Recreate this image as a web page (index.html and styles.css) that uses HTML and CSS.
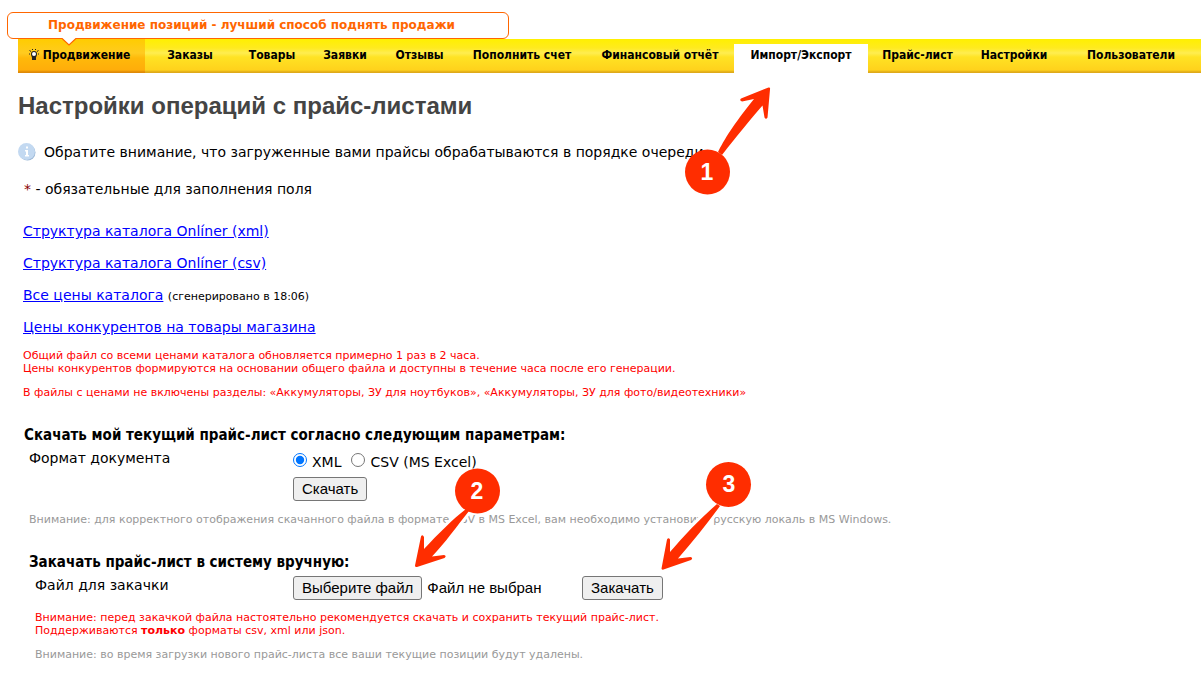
FILE: index.html
```html
<!DOCTYPE html>
<html lang="ru">
<head>
<meta charset="utf-8">
<title>Настройки операций с прайс-листами</title>
<link rel="stylesheet" href="styles.css">
</head>
<body>
<header class="header">
  <p class="balloon">Продвижение позиций - лучший способ поднять продажи
    <svg class="balloon-tail" width="14" height="8" viewBox="0 0 14 8"><path d="M0 0H14L7 7Z" fill="#fff"/><path d="M0 .5 7 7 14 .5" fill="none" stroke="#f60" stroke-width="1.2"/></svg>
  </p>
  <nav class="nav">
    <a class="tab tab-promo" href="#"><svg width="10" height="12" viewBox="0 0 10 12"><path d="M.5 1.500 2 2.500M9.500 1.500 8 2.500M0 5H1M9 5h1M3 .5h1M6 .5h1" stroke="#222" stroke-width="1"/><path d="M5 2a3 3 0 0 1 3 3c0 2-1 2.500-1 4v2H3V9C3 7.500 2 7 2 5a3 3 0 0 1 3-3Z" fill="#222"/><circle cx="5" cy="5" r="2" fill="#fff"/></svg>Продвижение</a>
    <a class="tab" href="#">Заказы</a>
    <a class="tab" href="#">Товары</a>
    <a class="tab" href="#">Заявки</a>
    <a class="tab" href="#">Отзывы</a>
    <a class="tab" href="#">Пополнить счет</a>
    <a class="tab" href="#">Финансовый отчёт</a>
    <a class="tab tab-active" href="#" aria-current="page">Импорт/Экспорт</a>
    <a class="tab" href="#">Прайс-лист</a>
    <a class="tab" href="#">Настройки</a>
    <a class="tab" href="#">Пользователи</a>
  </nav>
</header>

<main class="content">
  <h1 class="title">Настройки операций с прайс-листами</h1>
  <p class="info"><svg width="18" height="18" viewBox="0 0 18 18"><circle cx="9.500" cy="9.500" r="8" fill="#9db8d6"/><circle cx="8.500" cy="8.500" r="8.500" fill="#c3d9f1"/><path d="M8 3.500h2v2H8ZM7 7h3v5h1v1.500H7V12h1V8.500H7Z" fill="#fff"/></svg>Обратите внимание, что загруженные вами прайсы обрабатываются в порядке очереди.</p>
  <p class="required"><span class="star">*</span> - обязательные для заполнения поля</p>

  <section class="downloads">
    <ul class="links">
      <li><a href="#">Структура каталога Onlíner (xml)</a></li>
      <li><a href="#">Структура каталога Onlíner (csv)</a></li>
      <li><a href="#">Все цены каталога</a> <small class="small">(сгенерировано в 18:06)</small></li>
      <li><a href="#">Цены конкурентов на товары магазина</a></li>
    </ul>
    <p class="note warn">Общий файл со всеми ценами каталога обновляется примерно 1 раз в 2 часа.<br>Цены конкурентов формируются на основании общего файла и доступны в течение часа после его генерации.</p>
    <p class="note warn">В файлы с ценами не включены разделы: «Аккумуляторы, ЗУ для ноутбуков», «Аккумуляторы, ЗУ для фото/видеотехники»</p>
  </section>

  <form class="form">
    <h2 class="subtitle">Скачать мой текущий прайс-лист согласно следующим параметрам:</h2>
    <div class="row">
      <span class="label">Формат документа</span>
      <div class="fields">
        <div class="radios">
          <label class="radio"><input type="radio" name="format" checked>XML</label>
          <label class="radio"><input type="radio" name="format">CSV (MS Excel)</label>
        </div>
        <button class="button" type="button">Скачать</button>
      </div>
    </div>
    <p class="note muted">Внимание: для корректного отображения скачанного файла в формате CSV в MS Excel, вам необходимо установить русскую локаль в MS Windows.</p>
  </form>

  <form class="form upload">
    <h2 class="subtitle">Закачать прайс-лист в систему вручную:</h2>
    <div class="row">
      <span class="label">Файл для закачки</span>
      <div class="file">
        <input class="file-input" type="file" id="price-file">
        <label class="button" for="price-file">Выберите файл</label>
        <span class="file-name">Файл не выбран</span>
      </div>
      <button class="button" type="button">Закачать</button>
    </div>
    <p class="note warn">Внимание: перед закачкой файла настоятельно рекомендуется скачать и сохранить текущий прайс-лист.<br>Поддерживаются <b>только</b> форматы csv, xml или json.</p>
    <p class="note muted">Внимание: во время загрузки нового прайс-листа все ваши текущие позиции будут удалены.</p>
  </form>
</main>

<svg class="marks" width="780" height="620" viewBox="0 0 780 620">
  <g class="arrow">
    <path d="M718 152C724 140 733 125 754 99L742 101.500Q739 100.500 741 98.500L768.500 87.500Q770.500 87 770 89.500L767.500 117.500Q766 120 764.500 117.500L762.500 105.500C750 120 736 137 722 155Z"/>
    <path d="M466 509C453 519 438 534 424 549L424 537Q422.500 534 421 536.500L415 565.500Q415 567.500 417 567L444.500 558Q447 556 444 555L432 556.500C445 543 457 526 469 511Z"/>
    <path d="M717 504C702 517 686 533 670 552L670 539.500Q668.500 537 667 539.500L661.500 568.500Q661.500 570 663.500 569.500L691 560Q693.500 558 690.500 557L678 558.500C693 541 707 524 720 506Z"/>
  </g>
  <g class="dot"><circle cx="707.500" cy="172" r="22.500"/><circle cx="477.500" cy="491" r="22.500"/><circle cx="728.500" cy="484.500" r="22.500"/></g>
  <g class="digit"><text x="707" y="180">1</text><text x="477" y="499">2</text><text x="729" y="492">3</text></g>
</svg>
</body>
</html>
```
FILE: styles.css
```css
* { box-sizing: border-box; }
body { margin: 0; position: relative; background: #fff; color: #000; font: 14px/18px Verdana, "DejaVu Sans", sans-serif; }
h1, h2, p, ul { margin: 0; padding: 0; }

.header { padding: 12px 0 0 7px; }
.balloon { position: relative; width: 502px; height: 27px; padding: 0 40px; border: 1px solid #f60; border-radius: 6px; background: #fff; color: #f60; font-weight: bold; font-size: 12px; line-height: 25px; white-space: nowrap; }
.balloon-tail { position: absolute; left: 54px; top: 25px; z-index: 1; }
.nav { display: grid; grid-template-columns: 127fr 90fr 74fr 72fr 77fr 128fr 148fr 134fr 99fr 94fr 140fr; margin-left: 11px; height: 34px; background: linear-gradient(#fff000 0, #ffea20 9px, #ffed50 14px, #ffe324 18px, #ffd21c 31px, #dfaa1a 33px); }
.tab { display: flex; justify-content: center; padding-top: 8px; color: #000; font: bold 12px/16px Tahoma, "DejaVu Sans Condensed", sans-serif; text-decoration: none; white-space: nowrap; }
.tab-promo { gap: 4px; padding-right: 4px; background: linear-gradient(#ffcc00 0, #ffcb20 14px, #ffb90a 19px, #ffad0a 31px, #df8a08 33px); }
.tab-promo svg { margin-top: 2px; }
.tab-active { margin-top: 5px; padding-top: 3px; background: #fff; }

.content { padding: 19px 18px; }
.title { color: #444; font: bold 24px/28px Arial, "Liberation Sans", sans-serif; }
.info { display: flex; align-items: center; gap: 8px; margin-top: 23px; }
.required { margin: 19px 0 0 6px; }
.star { color: #800; }
.downloads { margin: 24px 0 0 5px; }
.links { display: grid; gap: 14px; list-style: none; }
a { color: #00f; }
.small, .note { font-size: 11px; line-height: 13px; }
.note { margin-top: 11px; }
.warn { color: #f00; }
.muted { color: #999; }
.links + .note { margin-top: 13px; }

.form { margin: 27px 0 0 6px; }
.subtitle { font: bold 15px/18px "DejaVu Sans Condensed", sans-serif; }
.row { display: flex; align-items: flex-start; margin: 5px 0 0 5px; }
.label { width: 264px; }
.radios { display: flex; gap: 10px; margin-top: 4px; }
.radio { display: flex; gap: 5px; }
.radio input { width: 14px; height: 14px; margin: 0; }
.button { display: inline-block; height: 24px; padding: 0 8px; border: 1px solid #767676; border-radius: 3px; background: #efefef; color: #000; font: 15px/22px Arial, "Liberation Sans", sans-serif; }
.fields .button { margin-top: 6px; }
.form .muted { margin: 12px 0 0 5px; }
.upload { margin-left: 11px; }
.upload .row { margin-left: 6px; }
.upload .label { width: 258px; }
.upload .note { margin-left: 6px; }
.upload .muted { margin-top: 11px; }
.file { display: flex; width: 289px; gap: 5px; }
.file-input { position: absolute; width: 1px; height: 1px; opacity: 0; }
.file-name { font: 15px/24px Arial, "Liberation Sans", sans-serif; }

.marks { position: absolute; left: 0; top: 0; pointer-events: none; }
.arrow { fill: #ff2d00; stroke: #fff; stroke-width: 6px; stroke-linejoin: round; paint-order: stroke; }
.dot { fill: #ff2d00; }
.digit { fill: #fff; font: bold 23px Arial, "Liberation Sans", sans-serif; text-anchor: middle; }
```
